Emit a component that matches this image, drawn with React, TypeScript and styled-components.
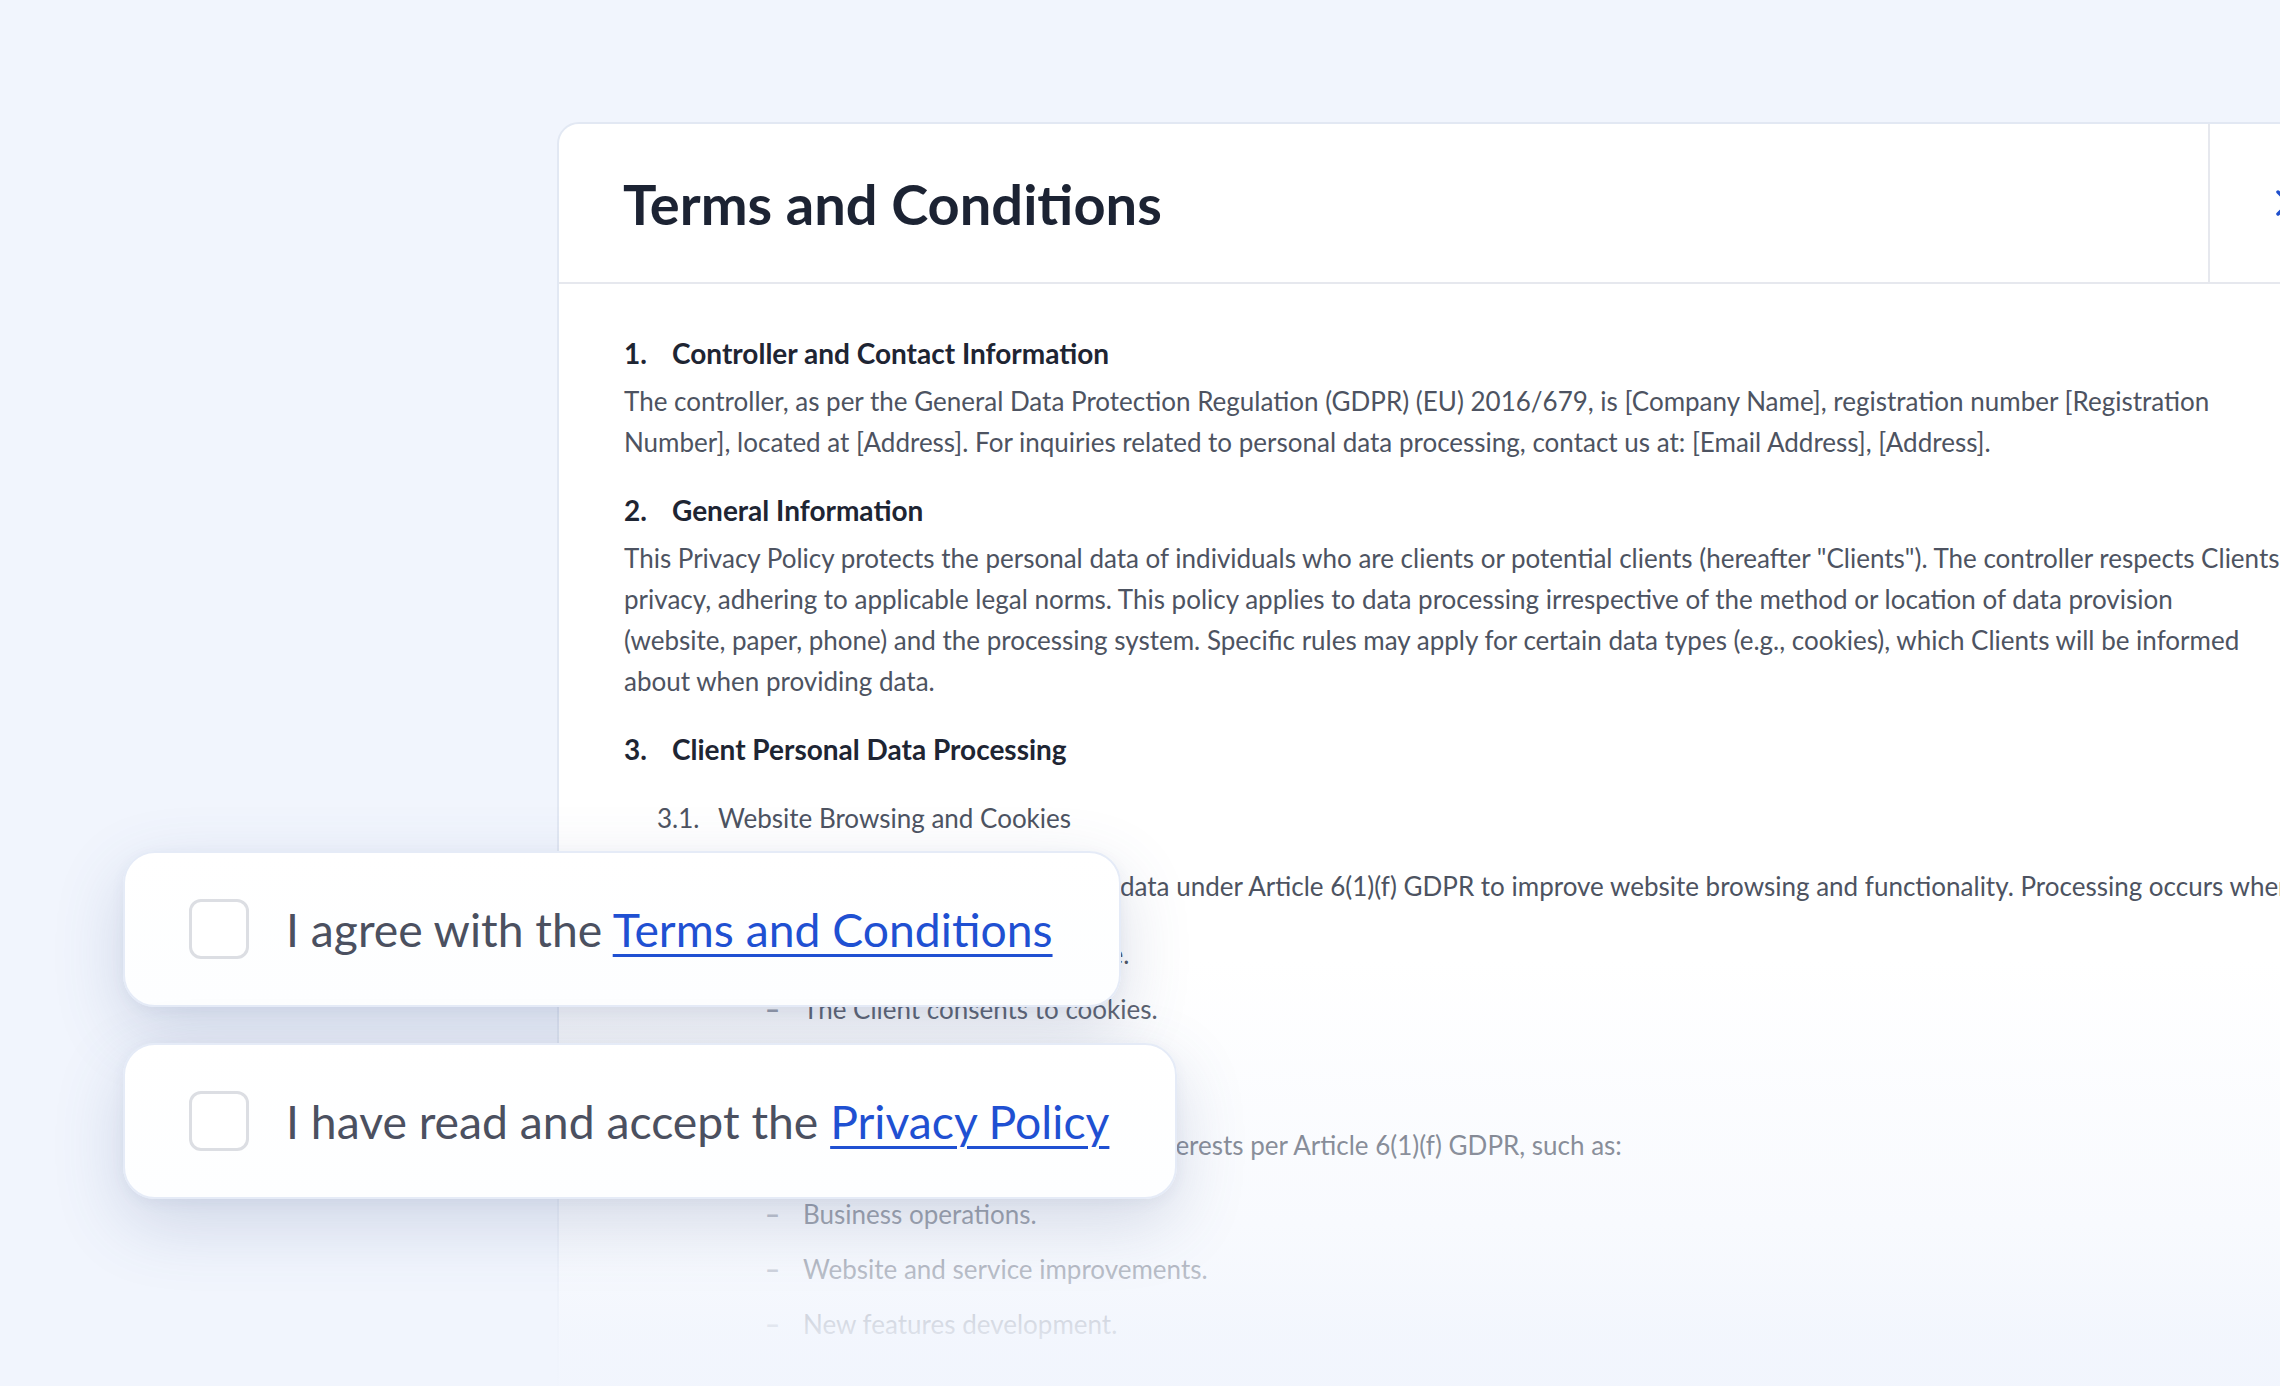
import React from 'react';
import styled, { createGlobalStyle } from 'styled-components';

const PAGE_BG = '#f1f5fd';

const GlobalStyle = createGlobalStyle`
  html, body {
    margin: 0;
    padding: 0;
    background: ${PAGE_BG};
  }
  body {
    font-family: Lato, 'Open Sans', sans-serif;
    overflow: hidden;
  }
  * {
    box-sizing: border-box;
  }
`;

const Stage = styled.div`
  position: relative;
  width: 2280px;
  height: 1386px;
  overflow: hidden;
  padding: 122px 0 0 557px;
  background: ${PAGE_BG};
`;

const Modal = styled.section`
  width: 1813px;
  background: #fff;
  border: 2px solid #e2e8f3;
  border-radius: 22px;
`;

const ModalHeader = styled.header`
  display: flex;
  height: 160px;
  border-bottom: 2px solid #e6e8ee;
`;

const Title = styled.h1`
  flex: 1;
  margin: 0;
  padding-left: 64px;
  display: flex;
  align-items: center;
  font-size: 56px;
  font-weight: 700;
  color: #1c2333;
`;

const CloseCell = styled.button`
  width: 160px;
  flex-shrink: 0;
  padding: 0;
  border: none;
  border-left: 2px solid #e6e8ee;
  background: none;
  display: flex;
  align-items: center;
  justify-content: center;
  color: #1f4fcc;
`;

const ModalBody = styled.div`
  padding: 50px 0 120px 65px;
  display: flex;
  flex-direction: column;
  color: #4d5361;
  font-size: 26px;
  line-height: 41px;
  white-space: nowrap;
`;

const SectionHead = styled.h2<{ $first?: boolean }>`
  margin: ${({ $first }) => ($first ? '0' : '28px')} 0 0;
  display: flex;
  font-size: 28px;
  font-weight: 700;
  line-height: 38px;
  color: #1e2533;
`;

const Num = styled.span<{ $w: number }>`
  width: ${({ $w }) => $w}px;
  flex-shrink: 0;
`;

const Paragraph = styled.p<{ $indent?: number; $gap?: number }>`
  margin: ${({ $gap }) => $gap ?? 9}px 0 0;
  padding-left: ${({ $indent }) => $indent ?? 0}px;
`;

const Line = styled.span`
  display: block;
`;

const SubHead = styled.div<{ $gap: number }>`
  margin-top: ${({ $gap }) => $gap}px;
  padding-left: 33px;
  display: flex;
`;

const Bullets = styled.ul<{ $gap: number }>`
  margin: ${({ $gap }) => $gap}px 0 0;
  padding: 0 0 0 141px;
  list-style: none;
  display: flex;
  flex-direction: column;
  gap: 14px;
`;

const Bullet = styled.li`
  display: flex;
  &::before {
    content: '–';
    width: 38px;
    flex-shrink: 0;
    font-weight: 900;
    color: #8e94a0;
  }
`;

const Fade = styled.div`
  position: absolute;
  left: 0;
  right: 0;
  top: 960px;
  bottom: 0;
  pointer-events: none;
  background: linear-gradient(
    to bottom,
    rgba(241, 245, 253, 0) 0%,
    rgba(241, 245, 253, 0.38) 46%,
    rgba(241, 245, 253, 0.5) 62%,
    rgba(241, 245, 253, 0.68) 75%,
    rgba(241, 245, 253, 0.88) 88%,
    rgba(241, 245, 253, 0.97) 100%
  );
`;

const ConsentStack = styled.div`
  position: absolute;
  left: 123px;
  top: 851px;
  display: flex;
  flex-direction: column;
  align-items: flex-start;
  gap: 36px;
`;

const ConsentCard = styled.label`
  height: 156px;
  display: inline-flex;
  align-items: center;
  gap: 37px;
  padding: 0 66px 0 64px;
  background: linear-gradient(180deg, #ffffff 0%, #fdfeff 100%);
  border: 2px solid #e5ebf7;
  border-radius: 32px;
  box-shadow: 0 24px 70px rgba(70, 90, 140, 0.2), 0 4px 14px rgba(70, 90, 140, 0.06);
`;

const Box = styled.span`
  width: 60px;
  height: 60px;
  flex-shrink: 0;
  border: 3px solid #dcdee3;
  border-radius: 12px;
  background: #fff;
`;

const ConsentText = styled.span`
  font-size: 46.3px;
  color: #4b5060;
  white-space: nowrap;
`;

const DocLink = styled.a`
  color: #1f50d2;
  text-decoration: underline;
  text-decoration-thickness: 3px;
  text-underline-offset: 7px;
`;

const CloseIcon = () => (
  <svg width="26" height="26" viewBox="0 0 26 26" fill="none">
    <path d="M2 2l22 22M24 2L2 24" stroke="currentColor" strokeWidth="3.5" strokeLinecap="round" />
  </svg>
);

const App = () => {
  return (
    <>
      <GlobalStyle />
      <Stage>
        <Modal>
          <ModalHeader>
            <Title>Terms and Conditions</Title>
            <CloseCell aria-label="Close">
              <CloseIcon />
            </CloseCell>
          </ModalHeader>

          <ModalBody>
            <SectionHead $first>
              <Num $w={48}>1.</Num>Controller and Contact Information
            </SectionHead>
            <Paragraph>
              <Line>
                The controller, as per the General Data Protection Regulation (GDPR) (EU) 2016/679, is [Company Name], registration number [Registration
              </Line>
              <Line>
                Number], located at [Address]. For inquiries related to personal data processing, contact us at: [Email Address], [Address].
              </Line>
            </Paragraph>

            <SectionHead>
              <Num $w={48}>2.</Num>General Information
            </SectionHead>
            <Paragraph>
              <Line>
                This Privacy Policy protects the personal data of individuals who are clients or potential clients (hereafter "Clients"). The controller respects Clients'
              </Line>
              <Line>
                privacy, adhering to applicable legal norms. This policy applies to data processing irrespective of the method or location of data provision
              </Line>
              <Line>
                (website, paper, phone) and the processing system. Specific rules may apply for certain data types (e.g., cookies), which Clients will be informed
              </Line>
              <Line>about when providing data.</Line>
            </Paragraph>

            <SectionHead>
              <Num $w={48}>3.</Num>Client Personal Data Processing
            </SectionHead>
            <SubHead $gap={30}>
              <Num $w={61}>3.1.</Num>Website Browsing and Cookies
            </SubHead>
            <Paragraph $indent={103} $gap={27}>
              The Controller processes personal data under Article 6(1)(f) GDPR to improve website browsing and functionality. Processing occurs when:
            </Paragraph>
            <Bullets $gap={27}>
              <Bullet>The Client visits the website.</Bullet>
              <Bullet>The Client consents to cookies.</Bullet>
            </Bullets>
            <SubHead $gap={27}>
              <Num $w={61}>3.2.</Num>Legitimate Interests
            </SubHead>
            <Paragraph $indent={94} $gap={27}>
              We process Client data for legitimate interests per Article 6(1)(f) GDPR, such as:
            </Paragraph>
            <Bullets $gap={28}>
              <Bullet>Business operations.</Bullet>
              <Bullet>Website and service improvements.</Bullet>
              <Bullet>New features development.</Bullet>
            </Bullets>
          </ModalBody>
        </Modal>

        <Fade />

        <ConsentStack>
          <ConsentCard>
            <Box />
            <ConsentText>
              I agree with the <DocLink href="#terms">Terms and Conditions</DocLink>
            </ConsentText>
          </ConsentCard>
          <ConsentCard>
            <Box />
            <ConsentText>
              I have read and accept the <DocLink href="#privacy">Privacy Policy</DocLink>
            </ConsentText>
          </ConsentCard>
        </ConsentStack>
      </Stage>
    </>
  );
};

export default App;
